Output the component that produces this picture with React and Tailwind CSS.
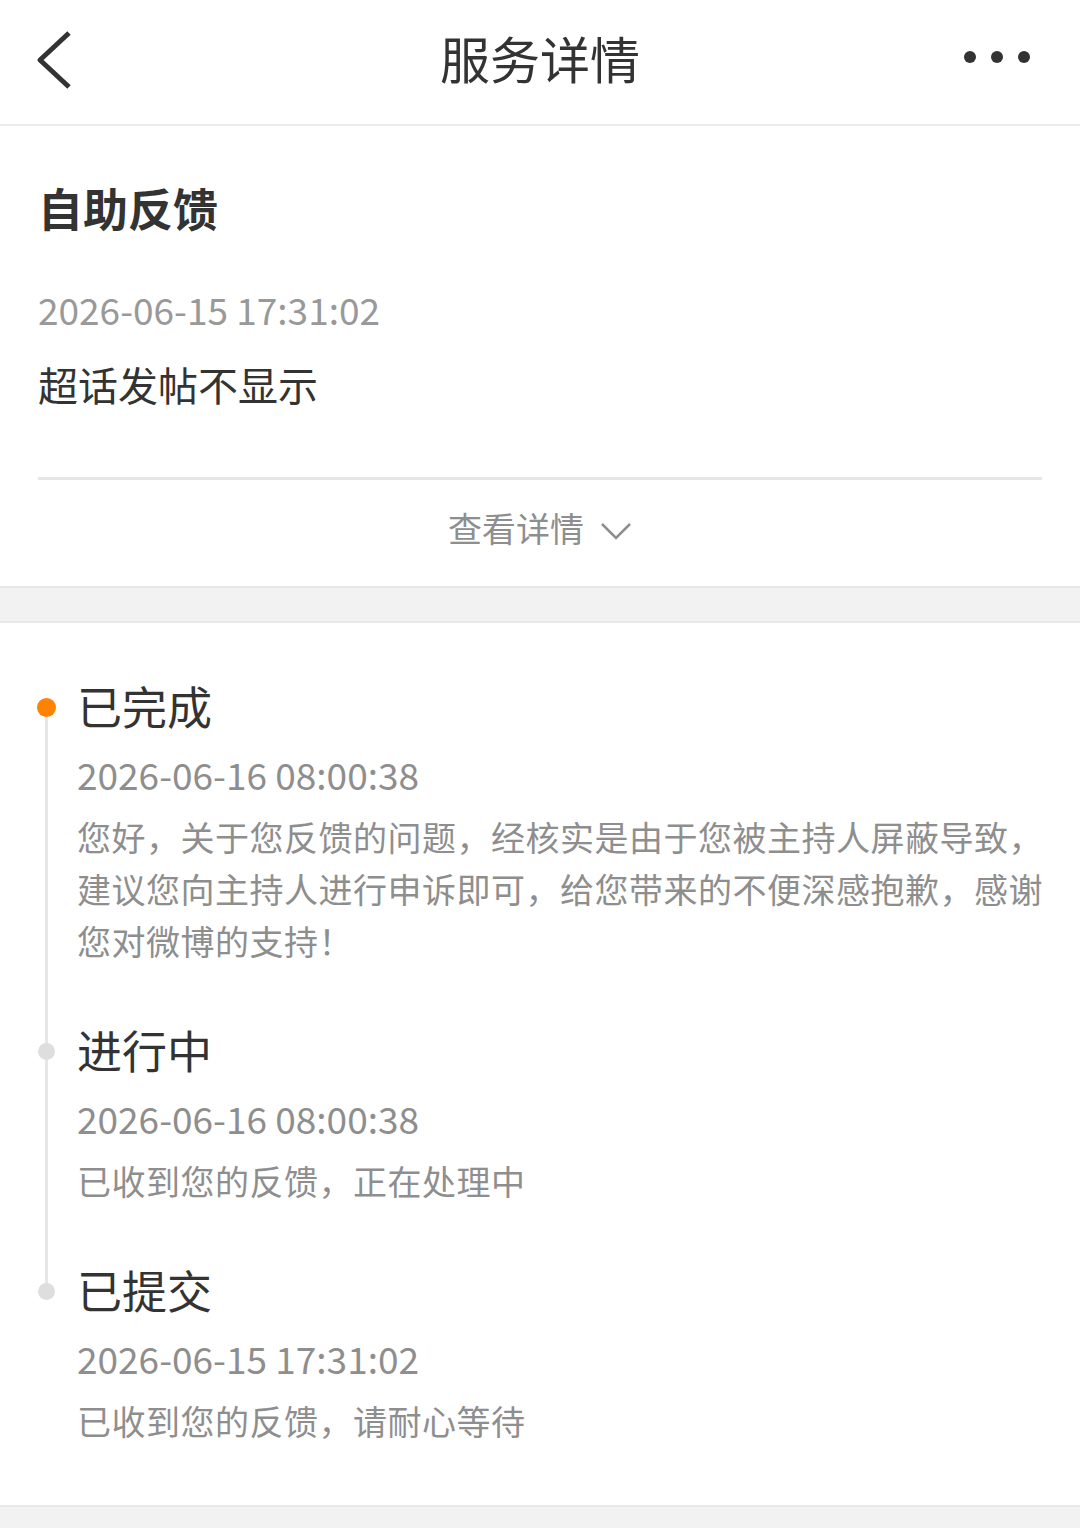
import React from "react";

const FONT = { fontFamily: '"Noto Sans CJK SC", "Noto Sans", sans-serif' };

// Timeline steps, newest first
const steps = [
  {
    title: "已完成",
    time: "2026-06-16 08:00:38",
    lines: [
      "您好，关于您反馈的问题，经核实是由于您被主持人屏蔽导致，",
      "建议您向主持人进行申诉即可，给您带来的不便深感抱歉，感谢",
      "您对微博的支持！",
    ],
    active: true,
  },
  {
    title: "进行中",
    time: "2026-06-16 08:00:38",
    lines: ["已收到您的反馈，正在处理中"],
  },
  {
    title: "已提交",
    time: "2026-06-15 17:31:02",
    lines: ["已收到您的反馈，请耐心等待"],
  },
];

const Header = () => (
  <header className="h-[126px] grid grid-cols-[1fr_auto_1fr] items-center px-[36px] bg-white border-b-2 border-[#ececec]">
    <svg width="40" height="60" viewBox="0 0 40 60" className="-mt-[4px]">
      <polyline
        points="33,3 4,30 33,57"
        fill="none"
        stroke="#333"
        strokeWidth="5"
        strokeLinejoin="round"
      />
    </svg>
    <h1 className="text-[50px] leading-none text-[#333] -mt-[10px]">服务详情</h1>
    <div className="flex justify-end gap-[15px] pr-[14px] -mt-[10px]">
      <span className="w-[12px] h-[12px] rounded-full bg-[#333]" />
      <span className="w-[12px] h-[12px] rounded-full bg-[#333]" />
      <span className="w-[12px] h-[12px] rounded-full bg-[#333]" />
    </div>
  </header>
);

const Step = ({ step, first }) => (
  <div className={first ? "" : "mt-[52px]"}>
    <div className="flex items-center h-[60px]">
      <div className="w-[77px] flex pl-[37px] pt-[4px]">
        <span
          className={
            step.active
              ? "relative z-10 w-[19px] h-[19px] rounded-full bg-[#ff8200]"
              : "relative z-10 w-[17px] h-[17px] ml-[1px] rounded-full bg-[#dedede]"
          }
        />
      </div>
      <span className="text-[45px] leading-none text-[#333]">{step.title}</span>
    </div>
    <div className="pl-[77px] mt-[14px] text-[37px] leading-[50px] text-[#8e8e8e]">
      {step.time}
    </div>
    <div className="pl-[77px] mt-[12px] text-[34px] leading-[52px] text-[#8e8e8e] tracking-[0.5px]">
      {step.lines.map((l) => (
        <div key={l} className="whitespace-nowrap">
          {l}
        </div>
      ))}
    </div>
  </div>
);

export default function App() {
  return (
    <div className="w-[1080px] h-[1528px] bg-[#f2f2f2] overflow-hidden" style={FONT}>
      <Header />

      {/* Feedback summary */}
      <section className="bg-white px-[38px] border-b-2 border-[#e8e8e8]">
        <div className="pt-[52px] text-[45px] leading-[60px] font-bold text-[#333]">自助反馈</div>
        <div className="mt-[46px] text-[37px] leading-[50px] text-[#999]">2026-06-15 17:31:02</div>
        <div className="mt-[25px] text-[40px] leading-[50px] text-[#333]">超话发帖不显示</div>
        <div className="mt-[68px] h-[3px] bg-[#e6e6e6]" />
        <div className="h-[106px] flex items-center justify-center gap-[16px] text-[#8e8e8e] pb-[10px]">
          <span className="text-[34px] leading-none">查看详情</span>
          <svg width="32" height="20" viewBox="0 0 32 20" className="mt-[6px]">
            <polyline points="2,3 16,17 30,3" fill="none" stroke="#8e8e8e" strokeWidth="2.5" />
          </svg>
        </div>
      </section>

      <div className="h-[33px]" />

      {/* Progress timeline */}
      <section className="relative bg-white border-t-2 border-[#e8e8e8] border-b-2 pt-[52px] pb-[58px]">
        <div className="absolute left-[45px] top-[88px] w-[3px] h-[586px] bg-[#e6e6e6]" />
        {steps.map((s, i) => (
          <Step key={s.title} step={s} first={i === 0} />
        ))}
      </section>
    </div>
  );
}
